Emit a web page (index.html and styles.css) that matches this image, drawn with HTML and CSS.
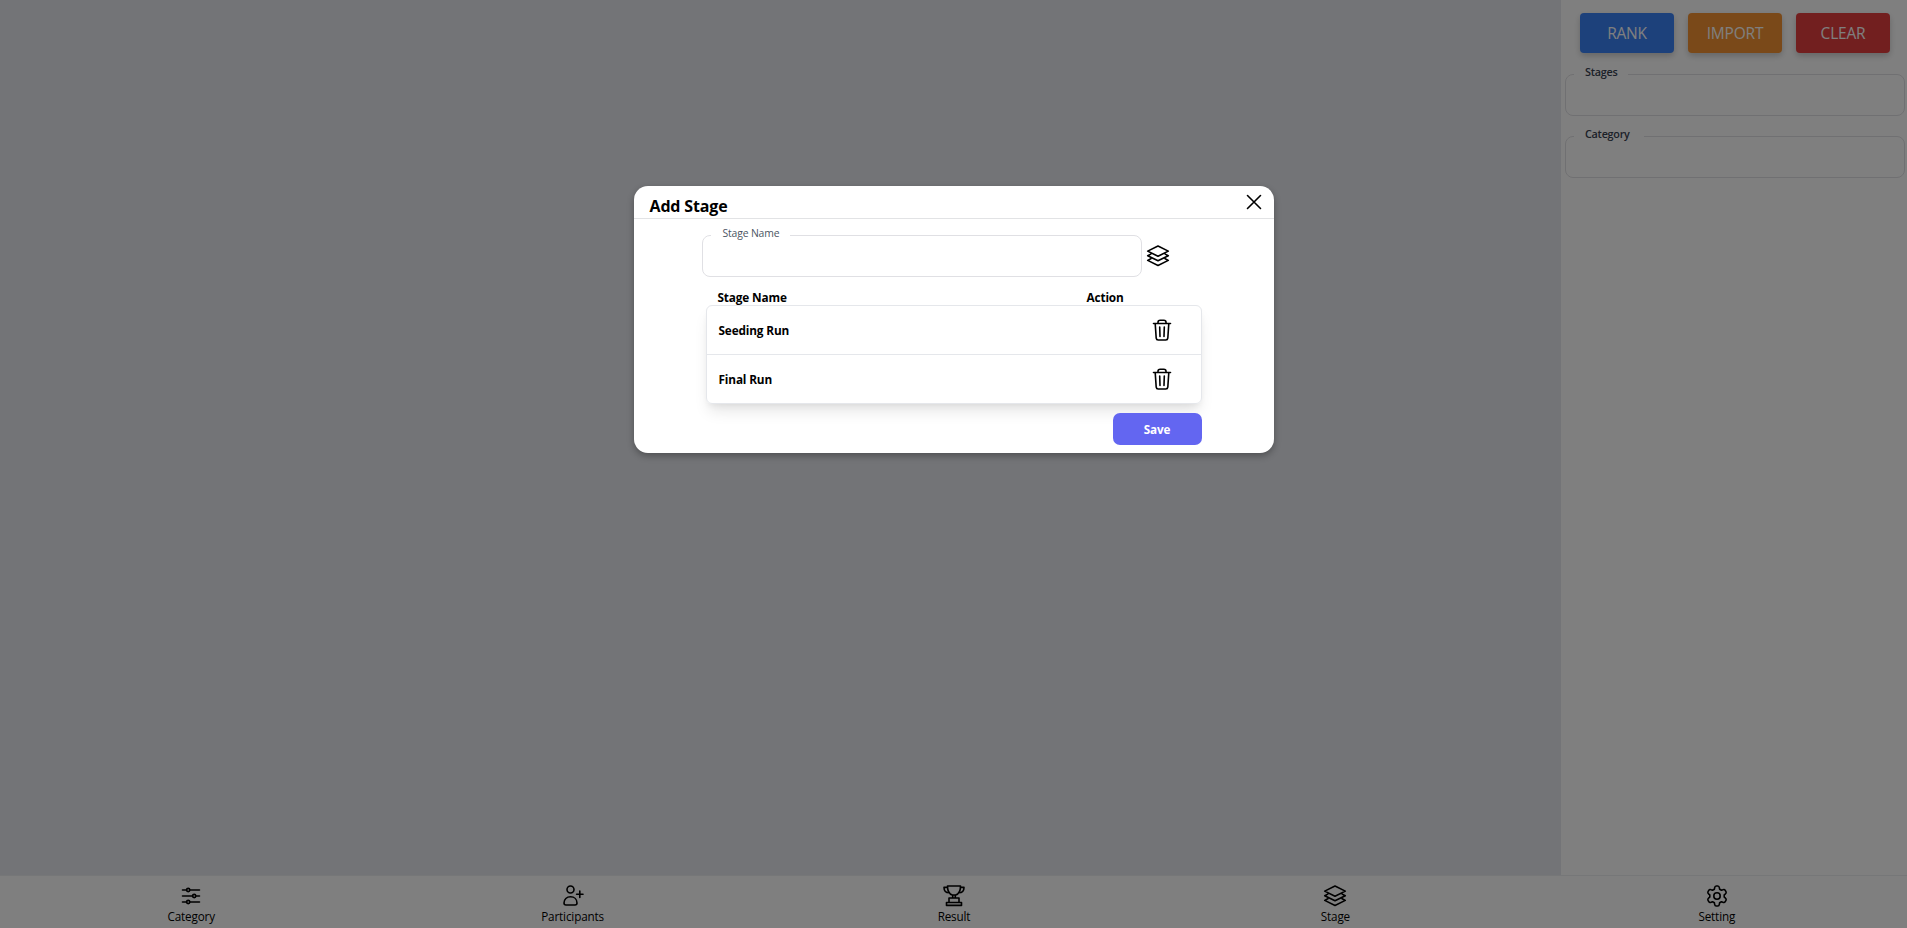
FILE: index.html
```html
<!DOCTYPE html>
<html lang="en">
<head>
<meta charset="utf-8">
<title>Add Stage</title>
<link rel="stylesheet" href="styles.css">
</head>
<body>
<svg class="defs" width="0" height="0" aria-hidden="true">
  <symbol id="layers" viewBox="0 0 24 24"><path d="M12 2 22.300 7.100 12 12.300 1.700 7.100ZM4.800 10.100 1.700 11.700l10.300 5.100 10.300-5.100-3.100-1.600M4.800 14.800 1.700 16.400l10.300 5.100 10.300-5.100-3.100-1.600"/></symbol>
  <symbol id="trash" viewBox="0 0 24 24"><path d="M3.500 5.500h17M5.200 5.500l1 14.700Q6.400 22 8.200 22h7.600q1.800 0 2-1.800l1-14.700M8 5.500V4.200Q8 2.200 10.200 2.200h3.600Q16 2.200 16 4.200v1.300M9.700 9l.3 9.500M14.300 9l-.3 9.500"/></symbol>
</svg>
<div class="app">
  <div class="workspace">
    <main class="canvas"></main>
    <aside class="sidebar">
      <div class="actions">
        <button class="action rank">RANK</button>
        <button class="action import">IMPORT</button>
        <button class="action clear">CLEAR</button>
      </div>
      <fieldset class="field side-field"><legend class="w-stages">Stages</legend></fieldset>
      <fieldset class="field side-field"><legend class="w-category">Category</legend></fieldset>
    </aside>
  </div>
  <nav class="navbar">
    <a class="nav-item"><svg class="icon" viewBox="0 0 24 24"><path d="M3.500 6h4M11 6h9.500M3.500 12h10M17 12h3.500M3.500 18h4M11 18h9.500"/><circle cx="9.200" cy="6" r="1.600"/><circle cx="15.200" cy="12" r="1.600"/><circle cx="9.200" cy="18" r="1.600"/></svg><span>Category</span></a>
    <a class="nav-item"><svg class="icon" viewBox="0 0 24 24"><circle cx="9.500" cy="5.500" r="3.500"/><path d="M3 19c0-3.800 2.700-6.200 6.500-6.200S16 15.200 16 19Q16 21 14 21H5q-2 0-2-2ZM18.800 7v6.400M15.600 10.200H22"/></svg><span>Participants</span></a>
    <a class="nav-item"><svg class="icon" viewBox="0 0 24 24"><path d="M5.500 2h13c0 4.700-1.700 8-4.800 9h-3.400c-3.100-1-4.800-4.300-4.800-9ZM5.500 3.400H2c0 3.300 2 5.300 5.200 5.300M18.500 3.400H22c0 3.300-2 5.300-5.200 5.300M10.700 11v3M13.300 11v3M7 18.500V14h10v4.500M4.500 18.500h15v2.900h-15Z"/></svg><span>Result</span></a>
    <a class="nav-item"><svg class="icon"><use href="#layers"/></svg><span>Stage</span></a>
    <a class="nav-item"><svg class="icon" viewBox="0 0 24 24"><path d="M9.600 3.900Q9.900 2 11.200 2h1.600q1.300 0 1.600 1.900l.2 1.300 1.900 1.100 1.300-.5q1.700-.7 2.400.5l.8 1.400q.7 1.200-.8 2.400l-1 .8v2.200l1 .8q1.500 1.200.8 2.400l-.8 1.400q-.7 1.200-2.400.5l-1.300-.5-1.900 1.100-.2 1.300Q14.100 22 12.800 22h-1.600q-1.300 0-1.600-1.900l-.2-1.300-1.900-1.100-1.300.5q-1.700.7-2.400-.5L3 16.300q-.7-1.200.8-2.400l1-.8v-2.200l-1-.8Q2.300 8.900 3 7.700l.8-1.400q.7-1.200 2.400-.5l1.300.5 1.900-1.100Z"/><circle cx="12" cy="12" r="3.200"/></svg><span>Setting</span></a>
  </nav>
</div>
<div class="overlay">
  <section class="modal">
    <header class="modal-head">
      <h1>Add Stage</h1>
      <svg class="close" viewBox="0 0 16 16"><path d="M1.500 1.500l13 13M14.500 1.500l-13 13"/></svg>
    </header>
    <div class="modal-body">
      <div class="name-row">
        <fieldset class="field name-field"><legend class="w-name">Stage Name</legend></fieldset>
        <svg class="icon"><use href="#layers"/></svg>
      </div>
      <div class="table-head"><span class="col-name">Stage Name</span><span>Action</span></div>
      <ul class="table">
        <li><span>Seeding Run</span><svg class="icon"><use href="#trash"/></svg></li>
        <li><span>Final Run</span><svg class="icon"><use href="#trash"/></svg></li>
      </ul>
      <button class="save">Save</button>
    </div>
  </section>
</div>
</body>
</html>
```
FILE: styles.css
```css
* { box-sizing: border-box; }
body { margin: 0; font-family: "Open Sans", "Noto Sans", sans-serif; color: #000; overflow: hidden; }
button { border: 0; font-family: inherit; }
.defs { position: absolute; }
.app { height: 100vh; display: flex; flex-direction: column; }
.workspace { flex: 1; display: flex; }
.canvas { flex: 1; background: #e6e8ee; }
.sidebar { width: 346px; padding: 13px 2px 0 4px; background: #fff; }
.actions { display: flex; gap: 14px; padding: 0 15px; margin-bottom: 10px; }
.action { width: 94px; height: 40px; border-radius: 4px; color: #fff; font-size: 15.500px; letter-spacing: -.2px; box-shadow: 0 3px 6px rgba(0,0,0,.2); padding: 0; }
.rank { background: #3b82f6; }
.import { background: #f59332; }
.clear { background: #e53e3e; }
.field { margin: 0; padding: 0 0 0 8px; border: 1px solid #e0e0e4; border-radius: 8px; min-width: 0; }
.field legend { height: 22px; line-height: 16px; padding: 1px 0 0 12px; color: #4b5563; font-size: 10.400px; letter-spacing: -.15px; white-space: nowrap; }
.side-field { height: 53px; margin-bottom: 9px; }
.side-field legend { padding-left: 11px; font-weight: 600; color: #374151; font-size: 10.800px; letter-spacing: -.25px; }
.field .w-stages { width: 54px; }
.field .w-category { width: 70px; }
.field .w-name { width: 79px; }
.navbar { height: 53px; display: grid; grid-template-columns: repeat(5, 1fr); background: #fff; border-top: 1px solid #eceef0; }
.nav-item { display: flex; flex-direction: column; align-items: center; padding: 8px 0 0 1px; font-size: 11.700px; line-height: 16px; letter-spacing: -.15px; }
.icon { width: 24px; height: 24px; fill: none; stroke: #000; stroke-width: 1.600; stroke-linejoin: round; stroke-linecap: round; }
.overlay { position: absolute; inset: 0; background: rgba(0,0,0,.5); display: flex; align-items: flex-start; justify-content: center; padding-top: 186px; }
.modal { width: 640px; height: 267px; background: #fff; border-radius: 14px; box-shadow: 0 3px 7px rgba(0,0,0,.3); }
.modal-head { height: 33px; display: flex; justify-content: space-between; padding: 8px 12px 0 16px; border-bottom: 1px solid #e2e3e5; }
.modal-head h1 { margin: 0; font-size: 16px; line-height: 25px; letter-spacing: -.15px; }
.close { width: 16px; height: 16px; fill: none; stroke: #000; stroke-width: 1.600; stroke-linecap: round; }
.modal-body { padding: 5px 72px 0 68px; display: flex; flex-direction: column; }
.name-row { display: flex; align-items: flex-end; gap: 4px; height: 53px; }
.name-field { width: 440px; height: 53px; }
.name-row .icon { margin-bottom: 9px; }
.table-head { display: flex; margin: 12px 0 0 4px; padding-left: 12px; height: 16px; font-size: 11.800px; line-height: 16px; font-weight: 700; letter-spacing: -.15px; }
.col-name { width: 369px; }
.table { list-style: none; margin: 0 0 0 4px; padding: 0; border: 1px solid #e5e7eb; border-radius: 6px; box-shadow: 0 10px 15px -3px rgba(0,0,0,.1), 0 4px 6px -2px rgba(0,0,0,.06); }
.table li { height: 48px; display: flex; align-items: center; justify-content: space-between; padding: 0 27px 0 12px; font-size: 11.800px; font-weight: 700; letter-spacing: -.15px; }
.table li + li { height: 49px; border-top: 1px solid #e5e7eb; }
.save { align-self: flex-end; width: 89px; height: 32px; margin-top: 9px; border-radius: 7px; background: #6366f1; color: #fff; font-weight: 700; font-size: 11.700px; letter-spacing: -.2px; }
```
